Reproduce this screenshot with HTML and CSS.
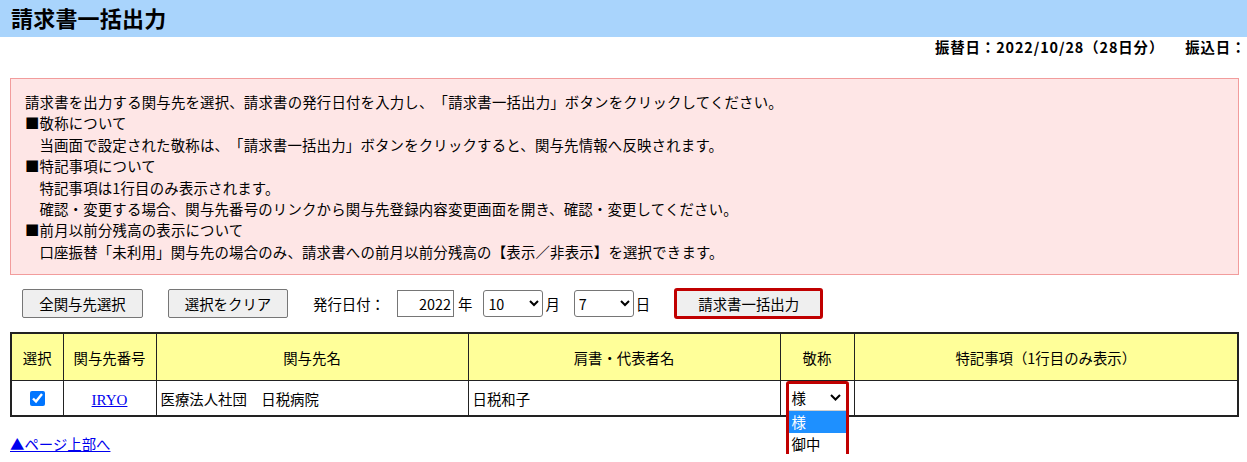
FILE: index.html
```html
<!DOCTYPE html>
<html lang="ja">
<head>
<meta charset="utf-8">
<title>請求書一括出力</title>
<link rel="stylesheet" href="styles.css">
</head>
<body>
<header class="titlebar"><h1>請求書一括出力</h1></header>
<div class="page">
  <div class="dates"><span>振替日：2022/10/28（28日分）</span><span class="furikomi">振込日：</span></div>

  <div class="notice">
    <p>請求書を出力する関与先を選択、請求書の発行日付を入力し、「請求書一括出力」ボタンをクリックしてください。</p>
    <p>■敬称について</p>
    <p class="ind">当画面で設定された敬称は、「請求書一括出力」ボタンをクリックすると、関与先情報へ反映されます。</p>
    <p>■特記事項について</p>
    <p class="ind">特記事項は1行目のみ表示されます。</p>
    <p class="ind">確認・変更する場合、関与先番号のリンクから関与先登録内容変更画面を開き、確認・変更してください。</p>
    <p>■前月以前分残高の表示について</p>
    <p class="ind">口座振替「未利用」関与先の場合のみ、請求書への前月以前分残高の【表示／非表示】を選択できます。</p>
  </div>

  <div class="controls">
    <button class="btn btn-all" type="button">全関与先選択</button>
    <button class="btn btn-clear" type="button">選択をクリア</button>
    <span class="label">発行日付：</span>
    <input class="year" type="text" value="2022">
    <span class="unit">年</span>
    <select class="sel sel-month"><option>10</option></select>
    <span class="unit unit-m">月</span>
    <select class="sel sel-day"><option>7</option></select>
    <span class="unit unit-m">日</span>
    <button class="btn btn-output" type="button">請求書一括出力</button>
  </div>

  <table class="list">
    <colgroup>
      <col class="c1"><col class="c2"><col class="c3"><col class="c4"><col class="c5"><col class="c6">
    </colgroup>
    <thead>
      <tr>
        <th>選択</th>
        <th>関与先番号</th>
        <th>関与先名</th>
        <th>肩書・代表者名</th>
        <th>敬称</th>
        <th>特記事項（1行目のみ表示）</th>
      </tr>
    </thead>
    <tbody>
      <tr>
        <td class="center"><input class="chk" type="checkbox" checked></td>
        <td class="center"><a class="code" href="#">IRYO</a></td>
        <td>医療法人社団　日税病院</td>
        <td>日税和子</td>
        <td class="hon-cell">
          <div class="hon">
            <div class="hon-sel"><span>様</span>
              <svg class="chev" width="11" height="7" viewBox="0 0 11 7"><polyline points="1,1 5.5,5.5 10,1" fill="none" stroke="#000" stroke-width="2"/></svg>
            </div>
            <div class="opt on">様</div>
            <div class="opt">御中</div>
          </div>
        </td>
        <td></td>
      </tr>
    </tbody>
  </table>

  <a class="top-link" href="#">▲ページ上部へ</a>
</div>
</body>
</html>
```

FILE: styles.css
```css
html {
  overflow: hidden;
}

body {
  margin: 0;
  font-family: "Noto Sans CJK JP", "Noto Sans", sans-serif;
  font-size: 14.4px;
  color: #000;
  background: #fff;
  text-spacing-trim: space-all;
}

.titlebar {
  background: #a9d4fc;
  height: 37px;
}

.titlebar h1 {
  margin: 0;
  padding-left: 11px;
  font-size: 22px;
  font-weight: bold;
  line-height: 34px;
  letter-spacing: 0.2px;
}

.page {
  padding-left: 10px;
  width: 1229px;
}

.dates {
  white-space: nowrap;
  font-weight: bold;
  line-height: 20px;
  padding-left: 925px;
  letter-spacing: 0.9px;
}

.dates .furikomi {
  margin-left: 21px;
}

.notice {
  margin-top: 21px;
  background: #fee6e6;
  border: 1px solid #f29c9c;
  padding: 12px 14px;
  line-height: 21.4px;
  letter-spacing: 0.2px;
}

.notice p {
  margin: 0;
}

.notice .ind {
  padding-left: 1em;
}

.controls {
  display: flex;
  align-items: center;
  margin-top: 13px;
  padding-left: 12px;
  height: 31px;
}

.btn {
  font: inherit;
  color: #000;
  background: #efefef;
  border: 1px solid #767676;
  border-radius: 2px;
  padding: 0;
  height: 29px;
}

.btn-all {
  width: 121px;
}

.btn-clear {
  width: 120px;
  margin-left: 25px;
}

.label {
  margin-left: 25px;
}

.year {
  font: inherit;
  margin-left: 12px;
  width: 57px;
  height: 27px;
  box-sizing: border-box;
  text-align: right;
  border: 1px solid #767676;
  padding: 0 2px;
}

.unit {
  margin-left: 4px;
}

.unit-m {
  margin-left: 2px;
}

.sel {
  font: inherit;
  height: 27px;
  width: 60px;
  margin-left: 11px;
  border: 1px solid #767676;
  border-radius: 3px;
  background: #fff;
  color: #000;
}

.sel-day {
  margin-left: 14px;
}

.btn-output {
  width: 149px;
  height: 31px;
  margin-left: 24px;
  border: 3px solid #c00000;
  border-radius: 3px;
}

.list {
  margin-top: 13px;
  width: 1229px;
  border-collapse: collapse;
  border: 2px solid #222;
  table-layout: fixed;
}

.c1 { width: 52px; }
.c2 { width: 93px; }
.c3 { width: 312px; }
.c4 { width: 312px; }
.c5 { width: 74px; }

.list th,
.list td {
  border: 1px solid #222;
  padding: 0 4px;
}

.list th {
  background: #ffff99;
  font-weight: normal;
  height: 46px;
  text-align: center;
}

.list td {
  height: 34px;
}

.list td.center {
  text-align: center;
}

.chk {
  width: 15px;
  height: 15px;
  margin: 4px 0 0;
}

.code {
  font-family: "Liberation Serif", serif;
  font-size: 15px;
  color: #0000ee;
}

.hon-cell {
  position: relative;
}

.hon {
  position: absolute;
  left: 5px;
  top: 0;
  width: 63px;
  box-sizing: border-box;
  border: 3px solid #c00000;
  border-radius: 3px;
  background: #fff;
  z-index: 2;
}

.hon-sel {
  height: 27px;
  display: flex;
  align-items: center;
  justify-content: space-between;
  padding: 0 5px 0 3px;
  border-bottom: 1px solid #cfcfcf;
  box-sizing: border-box;
}

.opt {
  height: 22px;
  line-height: 22px;
  padding-left: 3px;
}

.opt.on {
  background: #1e90ff;
  color: #fff;
}

.top-link {
  display: inline-block;
  margin-top: 16px;
  color: #0000ee;
}
```
